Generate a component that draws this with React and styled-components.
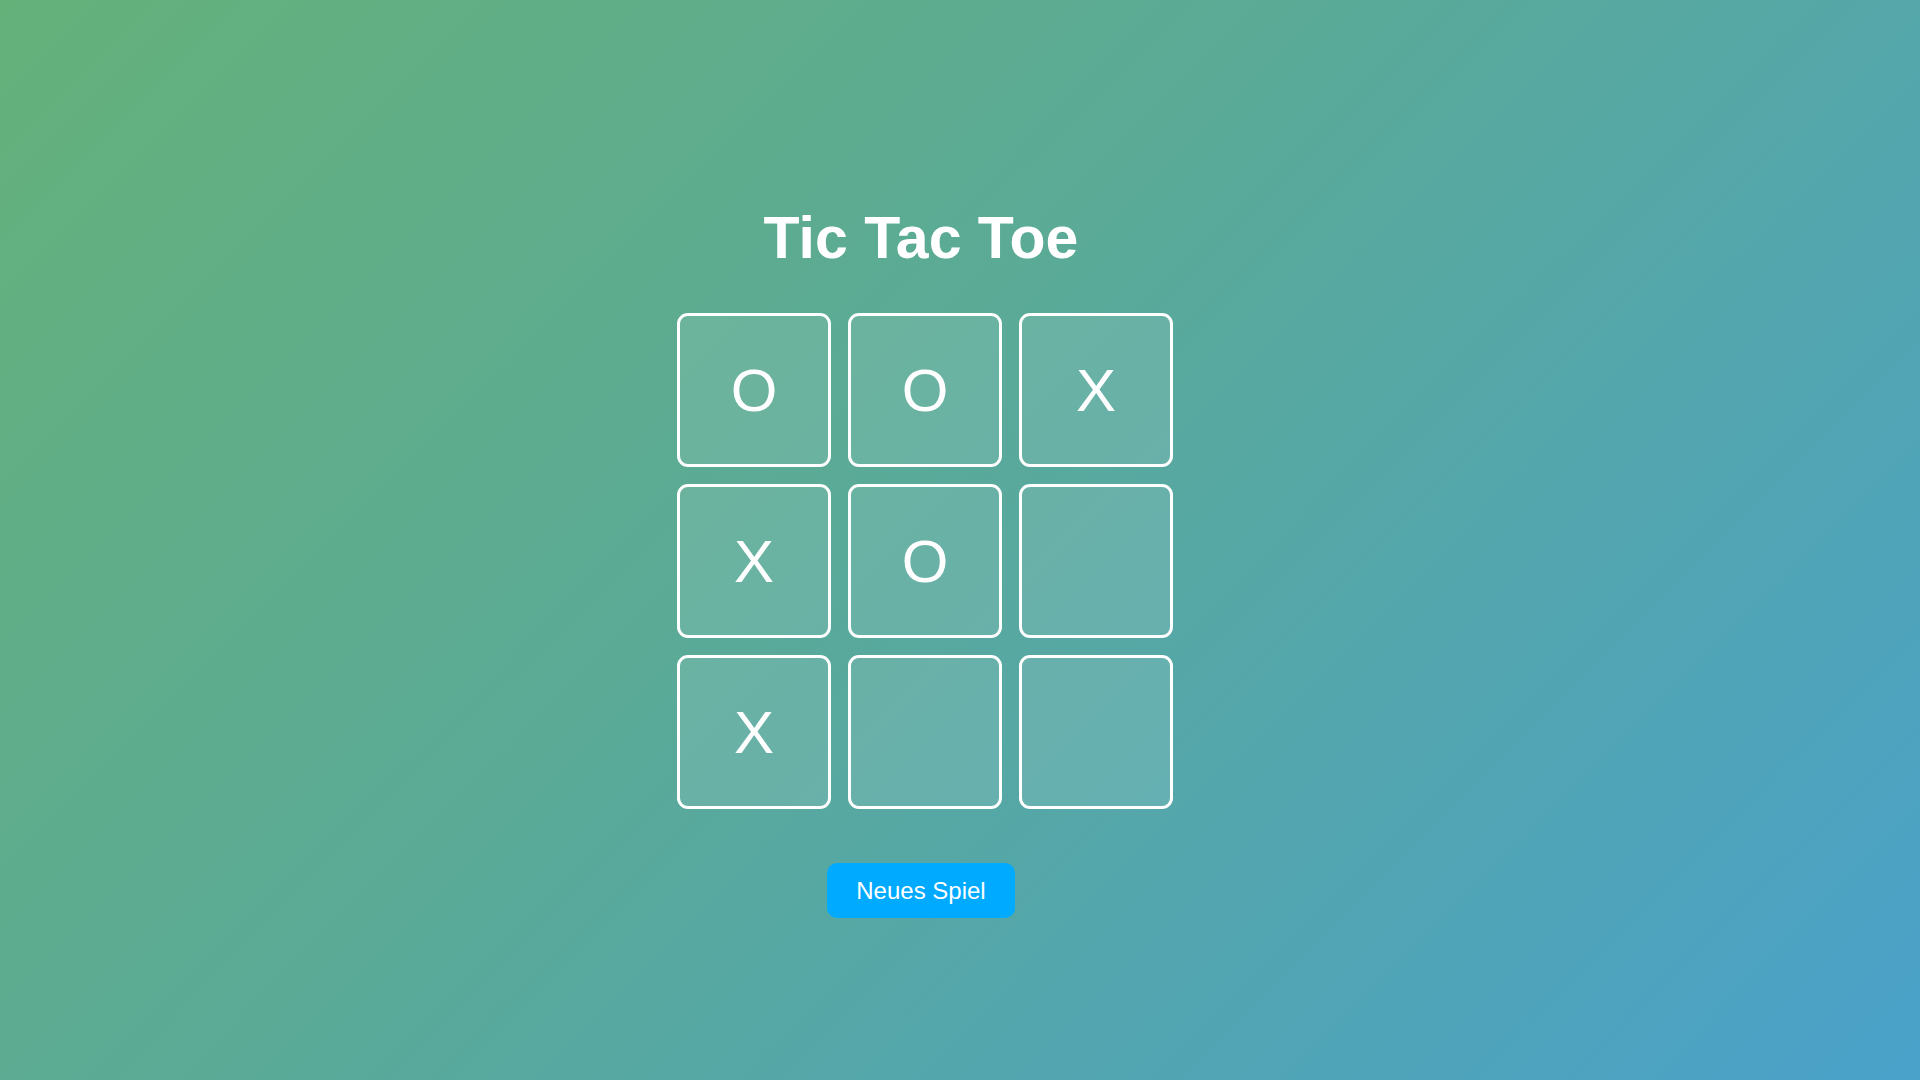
import styled, { createGlobalStyle } from "styled-components";

const GlobalStyle = createGlobalStyle`
    html, body {
        margin: 0;
        padding: 0;
    }
    body {
        font-family: "Liberation Sans", Arial, sans-serif;
        background: linear-gradient(135deg, #65b17a 0%, #5aaa98 45%, #4aa1ca 100%);
        min-height: 100vh;
    }
`;

const Page = styled.div`
    display: flex;
    flex-direction: column;
    align-items: center;
    min-height: 100vh;
    box-sizing: border-box;
    padding: 206px 78px 0 0;
`;

const Title = styled.h1`
    margin: 0 0 43px 0;
    color: white;
    font-size: 59px;
    font-weight: 700;
    line-height: 64px;
`;

const Board = styled.div`
    display: grid;
    grid-template-columns: repeat(3, 154px);
    grid-auto-rows: 154px;
    gap: 17px;
    margin-left: 8px;
`;

const Cell = styled.button`
    box-sizing: border-box;
    display: flex;
    align-items: center;
    justify-content: center;
    padding: 0;
    background-color: rgba(255, 255, 255, 0.1);
    border: 3px solid white;
    border-radius: 11px;
    color: white;
    font-family: "Liberation Sans", Arial, sans-serif;
    font-size: 60px;
    font-weight: 400;
    cursor: pointer;
`;

const NewGame = styled.button`
    margin-top: 54px;
    padding: 14px 29px;
    background-color: #00aaff;
    border: none;
    border-radius: 10px;
    color: white;
    font-family: "Liberation Sans", Arial, sans-serif;
    font-size: 24px;
    line-height: 27px;
    cursor: pointer;
`;

const board = ["O", "O", "X", "X", "O", "", "X", "", ""];

const App = () => {
    return (
        <>
            <GlobalStyle />
            <Page>
                <Title>Tic Tac Toe</Title>
                <Board>
                    {board.map((mark, i) => (
                        <Cell key={i}>{mark}</Cell>
                    ))}
                </Board>
                <NewGame>Neues Spiel</NewGame>
            </Page>
        </>
    );
};

export default App;
